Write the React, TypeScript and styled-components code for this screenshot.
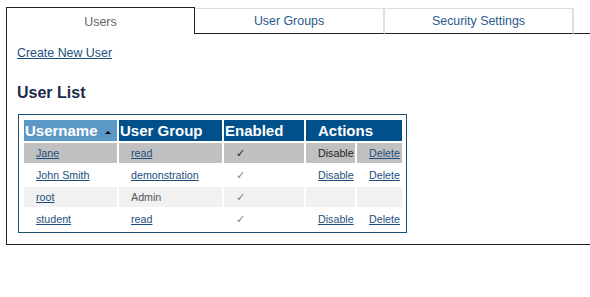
import React from "react";
import styled, { createGlobalStyle } from "styled-components";

const GlobalStyle = createGlobalStyle`
    html, body {
        margin: 0;
        padding: 0;
        background: #ffffff;
        overflow: hidden;
    }
    body {
        font-family: "Liberation Sans", Arial, sans-serif;
    }
`;

const Page = styled.div`
    padding: 7px 0 0 6px;
    width: 584px;
`;

const TabBar = styled.div`
    display: flex;
    align-items: flex-end;
    height: 27px;
`;

const Tab = styled.div<{ $active?: boolean; $width: number }>`
    box-sizing: border-box;
    width: ${props => props.$width}px;
    display: flex;
    justify-content: center;
    align-items: center;
    font-size: 12.4px;
    cursor: pointer;
    ${props => props.$active ? `
        height: 27px;
        border: 1px solid #222222;
        border-bottom: none;
        color: #666666;
        padding-top: 1px;
    ` : `
        height: 26px;
        border-top: 1px solid #dddddd;
        border-right: 2px solid #dcdfe3;
        border-bottom: 1px solid #222222;
        color: #2b5a8b;
    `}
`;

const TabFiller = styled.div`
    flex: 1;
    height: 26px;
    box-sizing: border-box;
    border-bottom: 1px solid #222222;
`;

const Panel = styled.div`
    display: flex;
    flex-direction: column;
    align-items: flex-start;
    border-left: 1px solid #222222;
    border-bottom: 1px solid #222222;
    padding: 12px 0 11px 10px;
`;

const CreateLink = styled.a`
    display: block;
    font-size: 12.4px;
    line-height: 14px;
    color: #1d4f7e;
    text-decoration: underline;
    cursor: pointer;
`;

const Title = styled.h2`
    margin: 24px 0 0;
    font-size: 16px;
    line-height: 18px;
    font-weight: bold;
    color: #1b2b4b;
`;

const TableBox = styled.div`
    display: block;
    margin: 12px 0 0 1px;
    border: 1px solid #1f4f70;
    padding: 3px 2px 1px 3px;
    line-height: 14px;
`;

const Table = styled.table`
    border-collapse: separate;
    border-spacing: 2px;
    table-layout: fixed;
`;

const HeadCell = styled.th<{ $sorted?: boolean; $pad?: number }>`
    height: 21px;
    padding: 0 0 0 ${props => props.$pad ?? 1}px;
    box-sizing: border-box;
    background: ${props => props.$sorted ? "#5c98c6" : "#00508b"};
    color: #ffffff;
    font-size: 15px;
    line-height: 17px;
    font-weight: bold;
    text-align: left;
    white-space: nowrap;
`;

const SortArrow = styled.span`
    display: inline-block;
    width: 0;
    height: 0;
    margin-left: 7px;
    vertical-align: 2px;
    border-left: 3px solid transparent;
    border-right: 3px solid transparent;
    border-bottom: 3px solid #000000;
`;

const Row = styled.tr<{ $tone: "selected" | "plain" | "alt" }>`
    background: ${props =>
        props.$tone === "selected" ? "#c0c0c0" : props.$tone === "alt" ? "#f1f1f1" : "#ffffff"};
`;

const Cell = styled.td`
    height: 20px;
    padding: 0 0 0 12px;
    box-sizing: border-box;
    font-size: 10.7px;
    line-height: 13px;
    color: #444444;
    white-space: nowrap;
`;

const CellLink = styled.a`
    color: #1d4f7e;
    text-decoration: underline;
    cursor: pointer;
`;

const Check = styled.span<{ $dark?: boolean }>`
    font-family: "DejaVu Sans", sans-serif;
    font-size: 11px;
    color: ${props => props.$dark ? "#222222" : "#808080"};
`;

const PlainText = styled.span<{ $dark?: boolean }>`
    color: ${props => props.$dark ? "#222222" : "#555555"};
`;

interface UserRow {
    name: string;
    group: string;
    groupLink: boolean;
    actions: boolean;
}

const users: UserRow[] = [
    { name: "Jane", group: "read", groupLink: true, actions: true },
    { name: "John Smith", group: "demonstration", groupLink: true, actions: true },
    { name: "root", group: "Admin", groupLink: false, actions: false },
    { name: "student", group: "read", groupLink: true, actions: true },
];

function App() {
    return (
        <Page>
            <GlobalStyle />
            <TabBar>
                <Tab $active $width={189}>Users</Tab>
                <Tab $width={190}>User Groups</Tab>
                <Tab $width={189}>Security Settings</Tab>
                <TabFiller />
            </TabBar>
            <Panel>
                <CreateLink>Create New User</CreateLink>
                <Title>User List</Title>
                <TableBox>
                    <Table>
                        <colgroup>
                            <col style={{ width: 93 }} />
                            <col style={{ width: 103 }} />
                            <col style={{ width: 80 }} />
                            <col style={{ width: 49 }} />
                            <col style={{ width: 45 }} />
                        </colgroup>
                        <thead>
                            <tr>
                                <HeadCell $sorted>Username<SortArrow /></HeadCell>
                                <HeadCell>User Group</HeadCell>
                                <HeadCell>Enabled</HeadCell>
                                <HeadCell colSpan={2} $pad={12}>Actions</HeadCell>
                            </tr>
                        </thead>
                        <tbody>
                            {users.map((user, i) => {
                                const selected = i === 0;
                                const tone = selected ? "selected" : i % 2 === 0 ? "alt" : "plain";
                                return (
                                    <Row key={user.name} $tone={tone}>
                                        <Cell><CellLink>{user.name}</CellLink></Cell>
                                        <Cell>
                                            {user.groupLink
                                                ? <CellLink>{user.group}</CellLink>
                                                : <PlainText>{user.group}</PlainText>}
                                        </Cell>
                                        <Cell><Check $dark={selected}>✓</Check></Cell>
                                        <Cell>
                                            {user.actions && (selected
                                                ? <PlainText $dark>Disable</PlainText>
                                                : <CellLink>Disable</CellLink>)}
                                        </Cell>
                                        <Cell>{user.actions && <CellLink>Delete</CellLink>}</Cell>
                                    </Row>
                                );
                            })}
                        </tbody>
                    </Table>
                </TableBox>
            </Panel>
        </Page>
    );
}

export default App;
